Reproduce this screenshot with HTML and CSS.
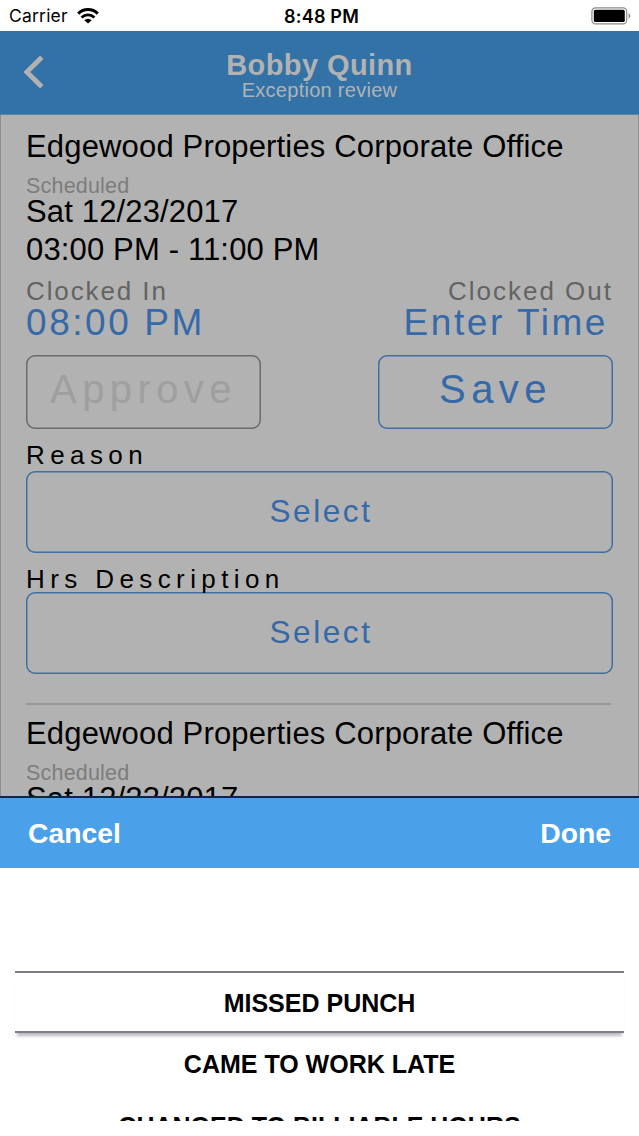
FILE: index.html
```
<!DOCTYPE html>
<html lang="en">
<head>
    <meta charset="UTF-8">
    <meta name="viewport" content="width=device-width, initial-scale=1.0">
    <title>Exception review</title>
    <link rel="stylesheet" href="styles.css">
</head>
<body>
    <div class="screen">
        <div class="status-bar">
            <div class="status-left">
                <span class="carrier">Carrier</span>
                <svg class="wifi" viewBox="0 0 22 16" width="22" height="16">
                    <path d="M1.2 5.6 A14 14 0 0 1 20.8 5.6" fill="none" stroke="#000" stroke-width="3"/>
                    <path d="M4.6 9.4 A9.2 9.2 0 0 1 17.4 9.4" fill="none" stroke="#000" stroke-width="2.8"/>
                    <path d="M11 15.6 L7.3 12.2 A5.2 5.2 0 0 1 14.7 12.2 Z"/>
                </svg>
            </div>
            <span class="clock">8:48 PM</span>
            <div class="status-right">
                <svg width="41" height="18" viewBox="0 0 41 18">
                    <rect x="0.9" y="0.9" width="34.8" height="16" rx="3.6" fill="none" stroke="#8a8a8a" stroke-width="1.2"/>
                    <rect x="2.8" y="2.8" width="31" height="12.2" rx="1.6"/>
                    <path d="M37.6 6.2 C39.9 7 39.9 10.8 37.6 11.6 Z" fill="#8a8a8a"/>
                </svg>
            </div>
        </div>

        <header class="header">
            <svg class="back" width="22" height="34" viewBox="0 0 22 34">
                <path d="M19.8 2.2 L4.8 17 L19.8 31.8" fill="none" stroke="#b2b2b2" stroke-width="4.8"/>
            </svg>
            <div class="title">Bobby Quinn</div>
            <div class="subtitle">Exception review</div>
        </header>

        <main class="list">
            <section class="card">
                <div class="place">Edgewood Properties Corporate Office</div>
                <div class="small-label">Scheduled</div>
                <div class="date">Sat 12/23/2017</div>
                <div class="hours">03:00 PM - 11:00 PM</div>
                <div class="clock-row">
                    <div>
                        <div class="clock-label">Clocked In</div>
                        <div class="clock-time">08:00 PM</div>
                    </div>
                    <div class="clock-out">
                        <div class="clock-label">Clocked Out</div>
                        <div class="clock-time">Enter Time</div>
                    </div>
                </div>
                <div class="button-row">
                    <button class="btn disabled">Approve</button>
                    <button class="btn">Save</button>
                </div>
                <div class="field-label">Reason</div>
                <button class="select">Select</button>
                <div class="field-label second">Hrs Description</div>
                <button class="select">Select</button>
            </section>
            <section class="card next">
                <div class="place">Edgewood Properties Corporate Office</div>
                <div class="small-label">Scheduled</div>
                <div class="date">Sat 12/23/2017</div>
            </section>
        </main>

        <div class="sheet">
            <div class="sheet-bar">
                <span>Cancel</span>
                <span>Done</span>
            </div>
            <div class="picker">
                <div class="option selected">MISSED PUNCH</div>
                <div class="option">CAME TO WORK LATE</div>
                <div class="option">CHANGED TO BILLIABLE HOURS</div>
            </div>
        </div>
    </div>
</body>
</html>
```
FILE: styles.css
```
* {
    box-sizing: border-box;
}

body {
    margin: 0;
    background-color: white;
    font-family: 'Liberation Sans', Arial, sans-serif;
    color: #000;
}

.screen {
    width: 639px;
    height: 1136px;
    overflow: hidden;
    display: flex;
    flex-direction: column;
    white-space: nowrap;
}

/* status bar */
.status-bar {
    height: 31px;
    flex-shrink: 0;
    display: flex;
    align-items: center;
    padding: 1px 7px 0 9px;
    font-family: Inter, sans-serif;
    font-size: 17.5px;
    line-height: 30px;
}

.status-left, .status-right {
    flex: 1;
    display: flex;
    align-items: center;
}

.status-right {
    justify-content: flex-end;
}

.carrier {
    letter-spacing: 0.2px;
}

.wifi {
    margin: 0 0 1px 9px;
}

.clock {
    margin-left: 2px;
    padding-top: 1px;
    font-weight: 600;
    font-size: 18px;
    letter-spacing: 0.2px;
}

/* header */
.header {
    height: 84px;
    flex-shrink: 0;
    position: relative;
    padding-top: 19px;
    background-color: #3372a7;
    border-bottom: 1px solid #628299;
    color: #b2b2b2;
    text-align: center;
}

.back {
    position: absolute;
    left: 22px;
    top: 24px;
}

.title {
    font-size: 29px;
    font-weight: bold;
    letter-spacing: 0.4px;
    line-height: 31px;
}

.subtitle {
    font-size: 20px;
    letter-spacing: 0.28px;
    line-height: 18px;
}

/* list of exceptions */
.list {
    height: 681px;
    flex-shrink: 0;
    overflow: hidden;
    padding: 0 25px;
    background-color: #b2b2b2;
    border-left: 1px solid #8f8f8f;
    border-right: 1px solid #8f8f8f;
}

.card {
    height: 588px;
    padding-top: 14px;
}

.card.next {
    margin-right: 2px;
    border-top: 2px solid #999;
}

.place {
    font-size: 31px;
    letter-spacing: 0.16px;
    line-height: 36px;
}

.next .place {
    margin-top: -3px;
}

.small-label {
    margin-top: 9px;
    font-size: 21.5px;
    letter-spacing: 0.2px;
    line-height: 24px;
    color: #7d7d7d;
}

.date {
    font-size: 31px;
    letter-spacing: 0.15px;
    line-height: 27px;
}

.hours {
    margin-top: 6px;
    font-size: 31px;
    letter-spacing: 0.15px;
    line-height: 38px;
}

.clock-row {
    display: flex;
    justify-content: space-between;
    margin-top: 8px;
}

.clock-out {
    text-align: right;
}

.clock-label {
    font-size: 26px;
    letter-spacing: 1.9px;
    line-height: 28px;
    color: #636363;
}

.clock-out .clock-label {
    letter-spacing: 2px;
}

.clock-time {
    font-size: 37px;
    letter-spacing: 2.55px;
    line-height: 36px;
    color: #3569a8;
}

.clock-out .clock-time {
    padding-right: 5px;
}

.button-row {
    display: flex;
    justify-content: space-between;
    margin-top: 14px;
}

.btn, .select {
    padding: 0;
    border: none;
    border-radius: 9px;
    background: none;
    box-shadow: inset 0 0 0 1.5px #3d6fa6;
    color: #3569a8;
    font-family: inherit;
}

.btn {
    width: 235px;
    height: 74px;
    padding-bottom: 6px;
    font-size: 40px;
    letter-spacing: 5.4px;
}

.btn.disabled {
    box-shadow: inset 0 0 0 1.5px #6b6b6b;
    color: #9f9f9f;
}

.select {
    display: block;
    width: 100%;
    height: 82px;
    padding: 0 0 2px 3px;
    font-size: 31.5px;
    letter-spacing: 2.6px;
}

.field-label {
    margin: 12px 0 2px;
    font-size: 26px;
    letter-spacing: 5.4px;
    line-height: 28px;
}

.field-label.second {
    margin-bottom: -1px;
}

/* bottom sheet with picker */
.sheet-bar {
    height: 72px;
    display: flex;
    justify-content: space-between;
    align-items: center;
    padding: 1px 28px 0;
    background-color: #4aa1e9;
    border-top: 2px solid #10283c;
    color: white;
    font-size: 28.3px;
    font-weight: bold;
}

.picker {
    height: 253px;
    overflow: hidden;
    padding: 103px 15px 0;
}

.option {
    height: 62px;
    line-height: 62px;
    font-size: 25px;
    font-weight: bold;
    text-align: center;
}

.option.selected {
    line-height: 60px;
    border-top: 2px solid #7c7f8a;
    border-bottom: 2px solid #7c7f8a;
    box-shadow: 0 5px 3px -2px #bbb;
}
```
